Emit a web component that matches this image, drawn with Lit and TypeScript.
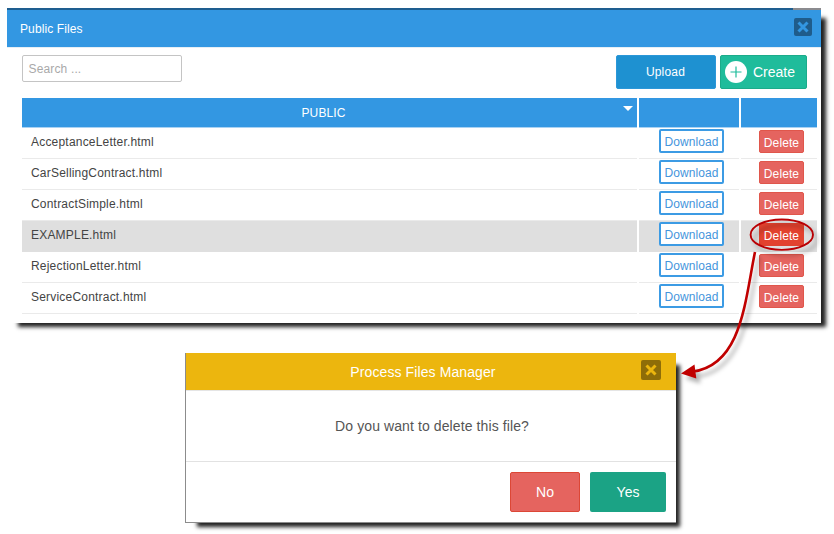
import { LitElement, html, css } from "lit";
import { customElement, property } from "lit/decorators.js";
import { classMap } from "lit/directives/class-map.js";

@customElement("close-icon")
class CloseIcon extends LitElement {
  static styles = css`
    :host { display: block; line-height: 0; }
    .mark { fill: none; stroke: currentColor; stroke-width: 3; }
  `;
  render() {
    return html`<svg width="12" height="12" viewBox="0 0 12 12">
      <path class="mark" d="M1.5 1.5 10.5 10.5M10.5 1.5 1.5 10.5" />
    </svg>`;
  }
}

@customElement("files-panel")
class FilesPanel extends LitElement {
  @property({ type: Array }) files: string[] = [];
  @property() selected = "";

  static styles = css`
    :host { display: block; box-sizing: border-box; width: 814px; height: 315px; background: #fff;
      box-shadow: 8px 7px 4px -3px #222; font-size: 12px; color: #444; }
    * { box-sizing: border-box; }
    .stripe { height: 2px; background: linear-gradient(to right, #1e5e90 786px, #8b8b8f 786px); }
    .head { display: flex; align-items: center; justify-content: space-between; height: 37px;
      background: #3397e2; padding: 0 9px 0 13px; color: #fff; }
    .title { letter-spacing: 0.1px; }
    .close { display: grid; place-items: center; width: 18px; height: 18px; margin-bottom: 4px;
      border-radius: 2px; background: #1f5c8b; color: #3397e2; }
    .tools { display: flex; align-items: flex-start; padding: 7px 14.5px 0 15px; height: 51px; border-top: 1px solid #e6eef5; }
    .search { width: 160px; height: 27px; border: 1px solid #c4c4c4; border-radius: 2px; padding: 0 0 0 5.5px;
      line-height: 27px; color: #a9a9a9; letter-spacing: 0.15px; }
    .upload, .create { display: flex; align-items: center; height: 34px; border-radius: 2px; color: #fff; }
    .upload { justify-content: center; width: 100px; margin-left: auto; background: #1e91d1;
      border: 1px solid #2b97d8; letter-spacing: 0.2px; }
    .create { width: 87px; margin-left: 4px; padding-left: 4.5px; gap: 6px; background: #1fbc9b;
      border: 1px solid #1bab8a; font-size: 14px; }
    .plus { display: block; }
    .grid { margin: 0 4px 0 15px; }
    .row { display: grid; grid-template-columns: 615px 100px 76px; column-gap: 2px; height: 31px; }
    .row.header { height: 30px; }
    .cell { border-bottom: 1px solid #eaeaea; display: flex; align-items: center; justify-content: center; }
    .cell.name { justify-content: flex-start; padding: 0 0 2px 9px; letter-spacing: 0.2px; }
    .header .cell { background: #3397e2; border-bottom: 1px solid #a9d2f3; color: #fff; }
    .header .main { position: relative; padding-right: 12px; letter-spacing: 0.1px; }
    .caret { position: absolute; right: 4px; top: 8px; border: 5px solid transparent; border-bottom: 0; border-top-color: #fff; }
    .active .cell { background: #dfdfdf; border-bottom-color: #dfdfdf; }
    .download, .delete { border-radius: 2px; text-align: center; letter-spacing: 0.1px; }
    .download { width: 65px; height: 24px; border: 2px solid #3c9be4; line-height: 23px; background: #fff;
      color: #4595dc; margin: 0 0 4px 5px; }
    .delete { width: 45px; height: 23px; line-height: 24px; margin: 0 0 3px 5px; border: 1px solid #e0564b;
      background: #e5645f; color: #fff; }
    .active .delete { background: #e2422f; border-color: #e2422f; }
  `;

  render() {
    return html`
      <div class="stripe"></div>
      <div class="head"><span class="title">Public Files</span><span class="close"><close-icon></close-icon></span></div>
      <div class="tools">
        <div class="search">Search ...</div>
        <div class="upload">Upload</div>
        <div class="create">
          <svg class="plus" width="22" height="22" viewBox="0 0 22 22">
            <circle cx="11" cy="11" r="11" fill="#fff" />
            <path d="M11 5.5V16.5M5.5 11H16.5" stroke="#1fbc9b" stroke-width="1.2" />
          </svg>
          <span>Create</span>
        </div>
      </div>
      <div class="grid">
        <div class="row header">
          <div class="cell main">PUBLIC<span class="caret"></span></div>
          <div class="cell"></div>
          <div class="cell"></div>
        </div>
        ${this.files.map((name) => html`
          <div class=${classMap({ row: true, active: name === this.selected })}>
            <div class="cell name">${name}</div>
            <div class="cell"><div class="download">Download</div></div>
            <div class="cell"><div class="delete">Delete</div></div>
          </div>`)}
      </div>`;
  }
}

@customElement("confirm-dialog")
class ConfirmDialog extends LitElement {
  static styles = css`
    :host { display: block; box-sizing: border-box; width: 491px; height: 170px; background: #fff;
      border-left: 1px solid #8c8c8c; border-bottom: 1px solid #8c8c8c; box-shadow: 8px 8px 4px -4px #222; font-size: 14px; }
    * { box-sizing: border-box; }
    .head { display: grid; grid-template-columns: 1fr auto 1fr; align-items: center; height: 38px;
      background: #ecb60e; border-bottom: 1px solid #e5e5e5; color: #fff; padding: 0 15px; }
    .title { grid-column: 2; margin-left: -16px; letter-spacing: 0.1px; }
    .close { justify-self: end; display: grid; place-items: center; width: 20px; height: 20px; margin-bottom: 3px;
      border-radius: 2px; background: #8e6d08; color: #ecb60e; }
    .message { display: grid; place-items: center; height: 71px; border-bottom: 1px solid #e2e2e2; color: #555;
      letter-spacing: 0.1px; padding-left: 2px; }
    .actions { display: flex; justify-content: flex-end; gap: 10px; padding: 10px 10px 0; }
    .button { height: 40px; border-radius: 2px; display: grid; place-items: center; color: #fff; }
    .no { width: 70px; background: #e5645f; border: 1px solid #dc4736; }
    .yes { width: 76px; background: #1ba385; }
  `;
  render() {
    return html`
      <div class="head"><span class="title">Process Files Manager</span><span class="close"><close-icon></close-icon></span></div>
      <div class="message"><span>Do you want to delete this file?</span></div>
      <div class="actions"><div class="button no">No</div><div class="button yes">Yes</div></div>`;
  }
}

@customElement("app-root")
class AppRoot extends LitElement {
  static styles = css`
    :host { display: block; position: relative; box-sizing: border-box; width: 834px; height: 534px; overflow: hidden;
      padding: 8px 0 0 7px; background: #fff; font-family: "Liberation Sans", Arial, sans-serif; }
    .dialog { margin: 30px 0 0 178px; }
    .callout { position: absolute; left: 0; top: 0; filter: drop-shadow(4px 5px 2px rgba(0, 0, 0, 0.3)); }
  `;
  private files = ["AcceptanceLetter.html", "CarSellingContract.html", "ContractSimple.html", "EXAMPLE.html", "RejectionLetter.html", "ServiceContract.html"];

  render() {
    return html`
      <files-panel .files=${this.files} selected="EXAMPLE.html"></files-panel>
      <confirm-dialog class="dialog"></confirm-dialog>
      <svg class="callout" width="834" height="534" viewBox="0 0 834 534">
        <ellipse cx="781.8" cy="234.7" rx="31.2" ry="15.2" fill="none" stroke="#b90004" stroke-width="1.9" />
        <path d="M755 252C745 300 742 365 693 371.5" fill="none" stroke="#c00000" stroke-width="2.6" />
        <path d="M681 373.5L694.5 364.5L696.3 378.5Z" fill="#c00000" />
      </svg>`;
  }
}
